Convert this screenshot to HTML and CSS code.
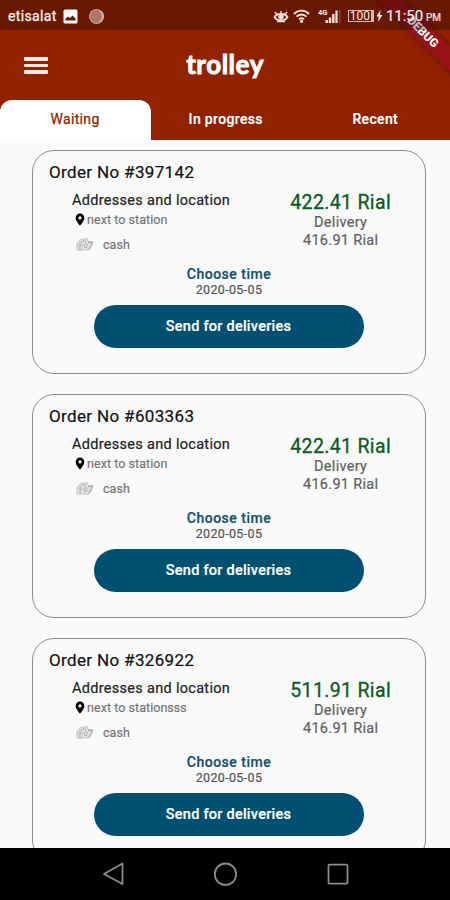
FILE: index.html
```html
<!DOCTYPE html>
<html lang="en">
<head>
    <meta charset="UTF-8">
    <meta name="viewport" content="width=device-width, initial-scale=1.0">
    <title>trolley</title>
    <link rel="stylesheet" href="styles.css">
</head>
<body>

    <!-- Icons shared by the order cards -->
    <svg class="sprite" width="0" height="0">
        <symbol id="pin" viewBox="0 0 10 13">
            <path fill-rule="evenodd" d="M5 .6A4.300 4.300 0 0 0 .7 4.900C.7 8 5 12.600 5 12.600S9.300 8 9.300 4.900A4.300 4.300 0 0 0 5 .6zM5 3.300a1.600 1.600 0 1 1 0 3.200 1.600 1.600 0 0 1 0-3.200z"/>
        </symbol>
        <symbol id="cash" viewBox="0 0 18 14">
            <path d="M1 6 5 2.500 11 1.500 12.500 4.500H17L15.500 9 13 13H1z" fill="#e2e2e2" stroke="#c4c4c4"/>
            <path d="M2.500 8 7 3.500l3 1.500M4 12.500V8h2.500M12 5.500h4.500L13 12" fill="none" stroke="#a8a8a8"/>
            <path d="M8 7.500 10.500 6.500 11 10 8.500 10.500z" fill="#f8f8f8" stroke="#a8a8a8"/>
        </symbol>
    </svg>

    <div class="app">
        <header class="header">
            <div class="status-bar">
                <span class="carrier">etisalat</span>
                <svg class="picture-icon" width="15" height="15" viewBox="0 0 15 15">
                    <rect x=".5" y=".5" width="14" height="14" rx="1.500" fill="#fff"/>
                    <path d="M2.500 11.500V9.500l2.500-2 2 1.500 2.500-2.500 3 3v2z" fill="#6e1a02"/>
                </svg>
                <span class="dot"></span>
                <div class="status-right">
                    <svg class="eye-icon" width="16" height="14" viewBox="0 0 16 14" fill="none" stroke="#f5dfd9">
                        <path d="M1.500 8C4 4 12 4 14.500 8 12 12.500 4 12.500 1.500 8z" stroke-width="1.800"/>
                        <circle cx="8" cy="8" r="2.300" fill="#f5dfd9"/>
                        <path d="M2 3l2 2.500M8 2v3M14 3l-2 2.500M4 12.500h8" stroke-width="1.400"/>
                    </svg>
                    <svg class="wifi-icon" width="17" height="14" viewBox="0 0 17 14" fill="none" stroke="#f5dfd9" stroke-width="1.900">
                        <path d="M1 5C5 .5 12 .5 16 5M3.500 7.700c3-3 7-3 10 0M6 10.300c1.500-1.500 3.500-1.500 5 0"/>
                        <circle cx="8.500" cy="12.300" r=".7" fill="#f5dfd9"/>
                    </svg>
                    <svg class="signal-icon" width="24" height="16" viewBox="0 0 24 16" fill="#f5dfd9">
                        <text x="0" y="7" class="net">4G</text>
                        <path d="M7.500 12h2.500v3H7.500zM10.800 9.500h2.500V15h-2.500zM14.100 6h2.500v9h-2.500zM17.400 2.500h2.200V15h-2.200z"/>
                        <path d="M21.500 2h.8v13h-.8z" opacity=".4"/>
                    </svg>
                    <span class="battery">100</span>
                    <svg class="bolt-icon" width="7" height="12" viewBox="0 0 7 12">
                        <path d="M4.500 0 .5 6.500h2.300L2 12l4.500-7H4z" fill="#fff"/>
                    </svg>
                    <span class="clock">11:50 <small>PM</small></span>
                </div>
            </div>

            <div class="app-bar">
                <div class="menu"><span></span><span></span><span></span></div>
                <div class="logo">trolley</div>
            </div>

            <nav class="tabs">
                <div class="tab active">Waiting</div>
                <div class="tab">In progress</div>
                <div class="tab">Recent</div>
            </nav>
            <div class="debug">DEBUG</div>
        </header>

        <main class="orders">
            <div class="card">
                <h2>Order No #397142</h2>
                <div class="details">
                    <div class="address">
                        <h3>Addresses and location</h3>
                        <p class="place"><svg width="10" height="13"><use href="#pin"/></svg>next to station</p>
                        <p class="pay"><svg width="18" height="14"><use href="#cash"/></svg>cash</p>
                    </div>
                    <div class="price">
                        <div class="total">422.41 Rial</div>
                        <div class="delivery">Delivery</div>
                        <div class="fee">416.91 Rial</div>
                    </div>
                </div>
                <div class="choose">Choose time</div>
                <div class="date">2020-05-05</div>
                <button>Send for deliveries</button>
            </div>

            <div class="card">
                <h2>Order No #603363</h2>
                <div class="details">
                    <div class="address">
                        <h3>Addresses and location</h3>
                        <p class="place"><svg width="10" height="13"><use href="#pin"/></svg>next to station</p>
                        <p class="pay"><svg width="18" height="14"><use href="#cash"/></svg>cash</p>
                    </div>
                    <div class="price">
                        <div class="total">422.41 Rial</div>
                        <div class="delivery">Delivery</div>
                        <div class="fee">416.91 Rial</div>
                    </div>
                </div>
                <div class="choose">Choose time</div>
                <div class="date">2020-05-05</div>
                <button>Send for deliveries</button>
            </div>

            <div class="card">
                <h2>Order No #326922</h2>
                <div class="details">
                    <div class="address">
                        <h3>Addresses and location</h3>
                        <p class="place"><svg width="10" height="13"><use href="#pin"/></svg>next to stationsss</p>
                        <p class="pay"><svg width="18" height="14"><use href="#cash"/></svg>cash</p>
                    </div>
                    <div class="price">
                        <div class="total">511.91 Rial</div>
                        <div class="delivery">Delivery</div>
                        <div class="fee">416.91 Rial</div>
                    </div>
                </div>
                <div class="choose">Choose time</div>
                <div class="date">2020-05-05</div>
                <button>Send for deliveries</button>
            </div>
        </main>

        <!-- Android navigation -->
        <footer class="nav-bar">
            <svg width="24" height="24" viewBox="0 0 24 24"><path d="M21.500 1.500V22L3 12z"/></svg>
            <svg width="24" height="24" viewBox="0 0 24 24"><circle cx="12.500" cy="12.200" r="10.700"/></svg>
            <svg width="24" height="24" viewBox="0 0 24 24"><rect x="3.500" y="2.700" width="19" height="19" rx="1"/></svg>
        </footer>
    </div>

</body>
</html>
```
FILE: styles.css
```css
* {
    box-sizing: border-box;
}
body {
    font-family: Roboto, "Liberation Sans", sans-serif;
    margin: 0;
    background-color: #fafafa;
}
h2, h3, p {
    margin: 0;
    font-weight: 400;
}
.sprite {
    position: absolute;
}
.app {
    display: flex;
    flex-direction: column;
    height: 900px;
    overflow: hidden;
}

/* Header */
.header {
    position: relative;
    overflow: hidden;
    flex: none;
    height: 140px;
    background-color: #902200;
    color: #fff;
}
/* dark overlay, the debug ribbon passes under it */
.status-bar {
    position: relative;
    z-index: 1;
    display: flex;
    align-items: center;
    height: 30px;
    padding: 2px 9px 0 8px;
    background-color: rgba(0, 0, 0, 0.27);
    color: #fbeeea;
}
.carrier {
    width: 55px;
    font-size: 14px;
    letter-spacing: 0.35px;
    white-space: nowrap;
    -webkit-text-stroke: 0.3px #fbeeea;
}
.dot {
    width: 15px;
    height: 15px;
    margin-left: 11px;
    border-radius: 50%;
    background-color: #b07565;
    border: 1px solid #c9a095;
    border-right: 2px solid #d9bdb4;
}
.status-right {
    display: flex;
    align-items: center;
    margin-left: auto;
}
.wifi-icon {
    margin-left: 4px;
}
.signal-icon {
    margin-left: 8px;
}
.net {
    font-size: 7.5px;
    font-weight: 900;
}
.battery {
    width: 26px;
    height: 12px;
    margin-left: 6px;
    border: 1px solid #dcb9b0;
    border-right-width: 3px;
    font-size: 12px;
    line-height: 11px;
    text-align: center;
}
.bolt-icon {
    margin: 0 3px 0 2px;
}
.clock {
    font-size: 15px;
    white-space: nowrap;
    -webkit-text-stroke: 0.2px #fbeeea;
}
.clock small {
    font-size: 10px;
    margin-left: -1px;
}
.app-bar {
    display: grid;
    grid-template-columns: 1fr auto 1fr;
    align-items: center;
    height: 70px;
    padding: 0 24px;
}
.menu {
    display: flex;
    flex-direction: column;
    gap: 3px;
    width: 24px;
    padding-top: 1px;
}
.menu span {
    height: 3.5px;
    border-radius: 1px;
    background-color: #fbe9e9;
}
.logo {
    padding-bottom: 2px;
    font-family: Lato, sans-serif;
    font-size: 26px;
    font-weight: 700;
    font-kerning: none;
    line-height: 30px;
    letter-spacing: 0.4px;
    -webkit-text-stroke: 0.9px #fff;
}
.tabs {
    display: flex;
    height: 40px;
}
.tab {
    flex: 1;
    font-size: 14px;
    font-weight: 500;
    line-height: 38px;
    letter-spacing: 0.35px;
    text-align: center;
    -webkit-text-stroke: 0.2px #fff;
}
.tab.active {
    flex: none;
    width: 151px;
    padding-right: 1px;
    background-color: #fff;
    color: #902200;
    border-radius: 12px 12px 0 0;
    font-weight: 400;
    -webkit-text-stroke: 0.25px #902200;
}
.debug {
    position: absolute;
    top: 23px;
    right: -38px;
    width: 130px;
    height: 18px;
    background-color: #981218;
    box-shadow: 0 0 6px rgba(0, 0, 0, 0.4);
    font-size: 12px;
    font-weight: 900;
    line-height: 18px;
    text-align: center;
    transform: rotate(45deg);
}

/* Orders */
.orders {
    display: flex;
    flex-direction: column;
    gap: 20px;
    flex: 1;
    min-height: 0;
    overflow: hidden;
    padding: 10px 24px 0 32px;
    background-color: #fafafa;
}
.card {
    display: flex;
    flex-direction: column;
    align-items: center;
    flex: none;
    height: 224px;
    padding: 11px 16px 0;
    border: 1px solid #8c8c8c;
    border-radius: 22px;
}
.card h2 {
    align-self: stretch;
    font-size: 17px;
    line-height: 20px;
    letter-spacing: 0.35px;
    color: #111;
    -webkit-text-stroke: 0.2px #111;
}
.details {
    display: flex;
    align-self: stretch;
    justify-content: space-between;
    height: 73px;
    padding: 10px 18px 0 23px;
}
.address h3 {
    font-size: 14.5px;
    line-height: 17px;
    letter-spacing: 0.3px;
    color: #222;
    -webkit-text-stroke: 0.2px #222;
}
.place, .pay {
    display: flex;
    align-items: center;
    font-size: 12.5px;
    letter-spacing: 0.05px;
    color: #757575;
    -webkit-text-stroke: 0.2px #757575;
}
.place {
    height: 20px;
    padding-left: 3px;
    gap: 2px;
}
.place svg {
    fill: #000;
}
.pay {
    height: 30px;
    padding-left: 4px;
    gap: 9px;
}
.price {
    text-align: center;
    color: #606060;
    white-space: nowrap;
}
.total {
    font-size: 19.5px;
    line-height: 22px;
    letter-spacing: 0.35px;
    color: #0b5a26;
    -webkit-text-stroke: 0.3px #0b5a26;
}
.delivery, .fee {
    font-size: 14.5px;
    line-height: 17.5px;
    letter-spacing: 0.3px;
    -webkit-text-stroke: 0.2px #606060;
}
.choose {
    margin-top: 10px;
    font-size: 14px;
    font-weight: 500;
    line-height: 18px;
    letter-spacing: 0.5px;
    color: #16506f;
    -webkit-text-stroke: 0.2px #16506f;
}
.date {
    font-size: 12.5px;
    line-height: 14px;
    letter-spacing: 0.35px;
    color: #555;
    -webkit-text-stroke: 0.2px #555;
}
button {
    width: 270px;
    height: 43px;
    margin-top: 8px;
    padding: 0 1px 0 0;
    border: none;
    border-radius: 22px;
    background-color: #015071;
    color: #fff;
    font-family: inherit;
    font-size: 14.5px;
    font-weight: 500;
    letter-spacing: 0.25px;
    -webkit-text-stroke: 0.2px #fff;
}

/* Bottom bar */
.nav-bar {
    display: flex;
    justify-content: center;
    align-items: center;
    gap: 88px;
    flex: none;
    height: 52px;
    background-color: #000;
}
.nav-bar svg {
    fill: none;
    stroke: #8c8c8c;
    stroke-width: 1.8;
    stroke-linejoin: round;
}
```
